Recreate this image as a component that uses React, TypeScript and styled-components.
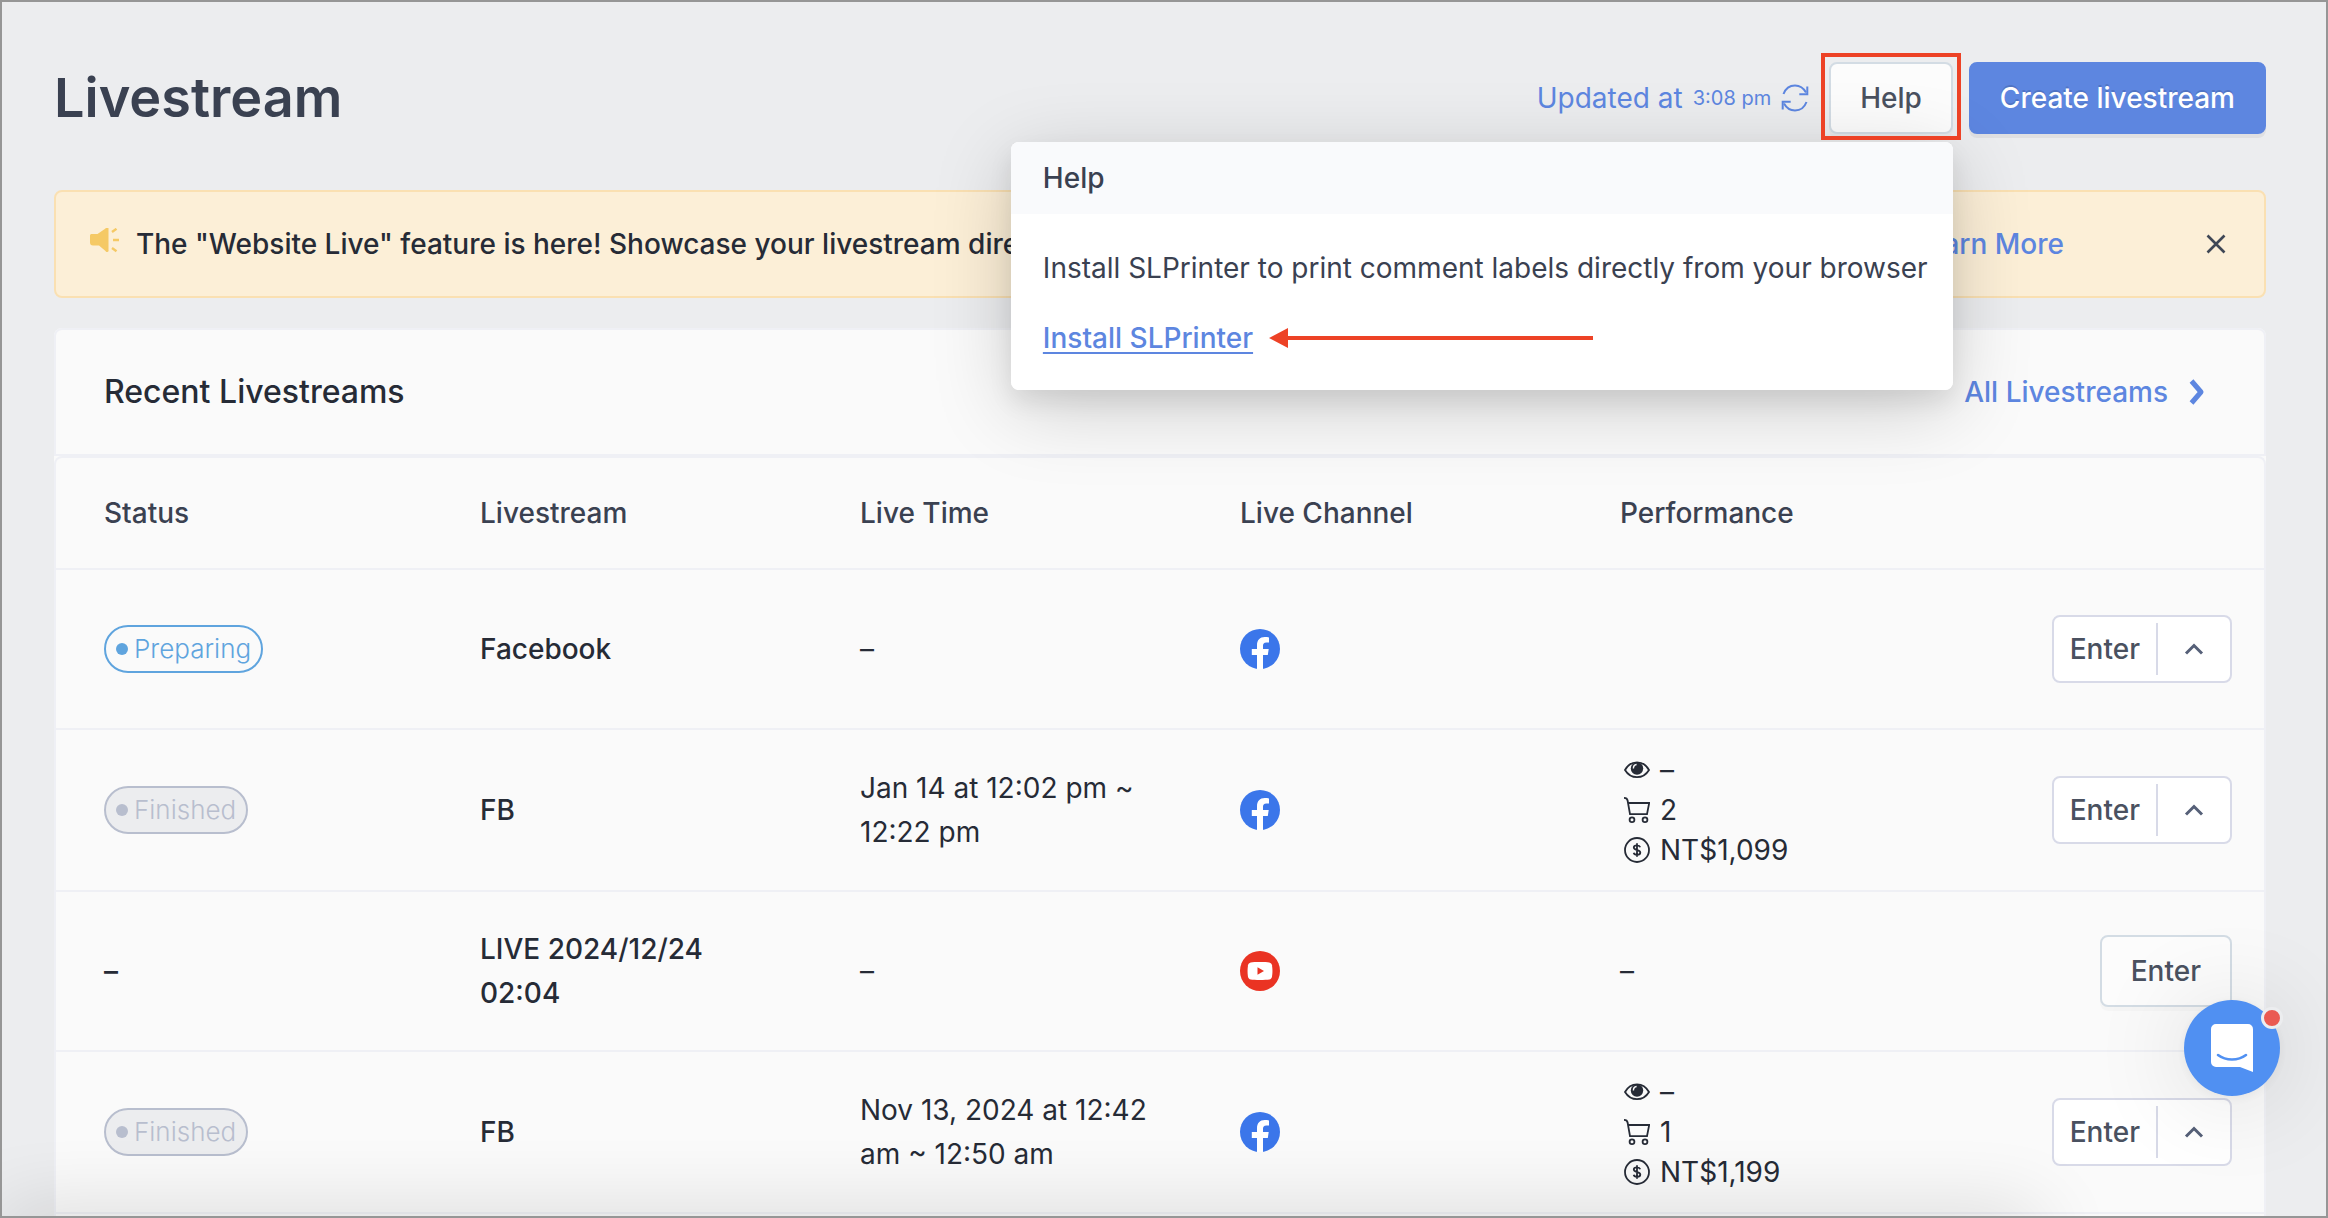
import React from "react";
import styled, { createGlobalStyle, css } from "styled-components";

const color = {
  page: "#ecedef",
  card: "#fafafa",
  line: "#eff0f5",
  ink: "#262b36",
  text: "#3a4151",
  blue: "#5d86e0",
  buttonText: "#4a5160",
  red: "#ed4226",
};

const GlobalStyle = createGlobalStyle`
  * { box-sizing: border-box; }
  body {
    margin: 0;
    background: ${color.page};
    color: ${color.ink};
    font-family: Inter, "Liberation Sans", sans-serif;
    font-size: 28px;
    line-height: 44px;
  }
  button { font: inherit; cursor: pointer; margin: 0; }
  a { color: ${color.blue}; text-decoration: none; }
  svg { display: block; flex: none; }
`;

const Page = styled.div`
  display: flex;
  flex-direction: column;
  height: 100vh;
  overflow: hidden;
  padding: 62px 62px 0 54px;
`;

const Frame = styled.div`
  position: fixed;
  inset: 0;
  z-index: 20;
  border: 2px solid #969696;
  pointer-events: none;
`;

const BottomShade = styled.div`
  position: fixed;
  left: 0;
  right: 290px;
  bottom: -40px;
  height: 40px;
  box-shadow: 0 0 80px rgba(0, 0, 0, 0.2);
  pointer-events: none;
`;

const Header = styled.header`
  position: relative;
  z-index: 5;
  display: flex;
  align-items: center;
  height: 72px;
  margin-bottom: 56px;
  flex: none;
`;

const Title = styled.h1`
  margin: 0 auto 0 0;
  font-size: 54px;
  line-height: 72px;
  font-weight: 600;
  color: ${color.text};
`;

const UpdatedButton = styled.button`
  display: flex;
  align-items: center;
  gap: 10px;
  margin-right: 20px;
  padding: 0;
  border: 0;
  background: none;
  color: ${color.blue};
`;

const UpdatedTime = styled.span`
  font-size: 20px;
`;

const HelpWrap = styled.div`
  position: relative;
  margin-right: 16px;
`;

const HelpHighlight = styled.div`
  position: absolute;
  inset: -9px -8px -6px;
  z-index: 2;
  border: 4px solid ${color.red};
  pointer-events: none;
`;

const buttonShape = css`
  height: 72px;
  padding: 0 29px;
  border-radius: 8px;
  font-weight: 500;
`;

const OutlineButton = styled.button`
  ${buttonShape}
  border: 2px solid #d3dce4;
  background: #fcfcfc;
  color: ${color.buttonText};
  box-shadow: 0 4px 0 rgba(0, 0, 0, 0.02);
`;

const PrimaryButton = styled.button`
  ${buttonShape}
  border: 2px solid ${color.blue};
  background: ${color.blue};
  color: #fff;
  text-shadow: 0 -2px 0 rgba(0, 0, 0, 0.12);
  box-shadow: 0 4px 0 rgba(0, 0, 0, 0.05);
`;

const Popover = styled.div`
  position: absolute;
  top: 80px;
  right: 0;
  width: 942px;
  border-radius: 8px;
  background: #fff;
  color: ${color.text};
  white-space: nowrap;
  overflow: hidden;
`;

const PopoverShadow = styled.div`
  position: absolute;
  top: 80px;
  right: 0;
  width: 942px;
  height: 248px;
  border-radius: 8px;
  box-shadow: 0 12px 24px rgba(0, 0, 0, 0.08), 0 18px 80px rgba(0, 0, 0, 0.18);
  pointer-events: none;
`;

const PopoverTitle = styled.h2`
  margin: 0;
  padding: 14px 32px;
  background: #f9fafc;
  font-size: 28px;
  line-height: 44px;
  font-weight: 500;
`;

const PopoverBody = styled.div`
  display: flex;
  flex-direction: column;
  gap: 26px;
  padding: 32px 24px 30px 32px;
`;

const PopoverText = styled.p`
  margin: 0;
`;

const PopoverAction = styled.div`
  display: flex;
  align-items: center;
  gap: 16px;
`;

const InstallLink = styled.a`
  font-weight: 500;
  text-decoration: underline;
  text-decoration-thickness: 2px;
  text-underline-offset: 4px;
  text-decoration-skip-ink: none;
`;

const Alert = styled.section`
  display: flex;
  align-items: center;
  flex: none;
  margin-bottom: 30px;
  padding: 32px;
  border: 2px solid #fae0b2;
  border-radius: 8px;
  background: #fcefd7;
  line-height: 40px;
  font-weight: 500;
`;

const AlertBody = styled.div`
  display: flex;
  flex: 1;
  min-width: 0;
  padding: 0 136px 0 16px;
`;

const AlertText = styled.span`
  flex: 1;
  min-width: 0;
  overflow: hidden;
  text-overflow: ellipsis;
  white-space: nowrap;
`;

const CloseButton = styled.button`
  display: grid;
  place-items: center;
  width: 32px;
  height: 32px;
  padding: 0;
  border: 0;
  background: none;
  color: #3f4755;
`;

const Panel = styled.section`
  display: flex;
  flex-direction: column;
  flex: 1;
  border-radius: 8px 8px 0 0;
  background: ${color.card};
`;

const PanelHead = styled.div`
  display: flex;
  align-items: center;
  justify-content: space-between;
  height: 128px;
  padding: 0 48px;
  border: 2px solid ${color.line};
  border-radius: 8px 8px 0 0;
`;

const PanelTitle = styled.h2`
  margin: 0;
  font-size: 32px;
  line-height: 44px;
  font-weight: 500;
`;

const AllLink = styled.a`
  display: flex;
  align-items: center;
  gap: 16px;
  font-weight: 500;
`;

const TableBox = styled.div`
  flex: 1;
  border: 2px solid ${color.line};
  border-bottom: 0;
  border-radius: 8px 8px 0 0;
`;

const Table = styled.table`
  width: 100%;
  table-layout: fixed;
  border-collapse: separate;
  border-spacing: 0;
`;

const Col = styled.col<{ $width?: number }>`
  width: ${(p) => (p.$width ? `${p.$width}px` : "auto")};
`;

const cell = css`
  padding: 0 60px 0 24px;
  border-bottom: 2px solid ${color.line};
  text-align: left;
  vertical-align: middle;

  &:first-child { padding-left: 48px; }
  &:last-child { padding: 0 32px 0 0; }
`;

const Th = styled.th`
  ${cell}
  height: 112px;
  font-weight: 500;
  color: ${color.text};
`;

const Td = styled.td<{ $strong?: boolean }>`
  ${cell}
  height: 160px;
  font-weight: ${(p) => (p.$strong ? 500 : 400)};
`;

const Pill = styled.span<{ $done: boolean }>`
  display: inline-flex;
  align-items: center;
  gap: 6px;
  height: 48px;
  padding: 0 10px;
  border: 2px solid currentColor;
  border-radius: 24px;
  background: ${(p) => (p.$done ? "#ecedef" : "transparent")};
  color: ${(p) => (p.$done ? "#b8bece" : "#5fa4de")};
  font-size: 26px;
  font-weight: 300;
  vertical-align: middle;
`;

const Dot = styled.i`
  width: 12px;
  height: 12px;
  border-radius: 50%;
  background: currentColor;
`;

const Metrics = styled.ul`
  list-style: none;
  margin: 0;
  padding: 20px 0;
  line-height: 40px;
`;

const Metric = styled.li`
  display: flex;
  align-items: center;
  gap: 10px;
  margin-left: 4px;
`;

const Actions = styled.div`
  display: flex;
  justify-content: flex-end;
`;

const SplitButton = styled.div`
  display: flex;
  align-items: center;
  height: 68px;
  border: 2px solid #d8dae8;
  border-radius: 8px;
  background: #fff;
`;

const SplitMain = styled.button`
  height: 52px;
  padding: 0 16px;
  border: 0;
  border-right: 2px solid #d8dae8;
  background: none;
  color: ${color.buttonText};
  font-weight: 500;
`;

const SplitToggle = styled.button`
  display: grid;
  place-items: center;
  width: 72px;
  height: 52px;
  padding: 0;
  border: 0;
  background: none;
  color: #566078;
`;

const ChatLauncher = styled.button`
  position: fixed;
  right: 48px;
  bottom: 122px;
  z-index: 10;
  display: grid;
  place-items: center;
  width: 96px;
  height: 96px;
  padding: 0;
  border: 0;
  border-radius: 50%;
  background: #5090f2;
  box-shadow: 0 2px 12px rgba(0, 0, 0, 0.06), 0 4px 100px rgba(0, 0, 0, 0.14);
`;

const ChatBadge = styled.span`
  position: absolute;
  top: 7px;
  right: -3px;
  width: 22px;
  height: 22px;
  border: 3px solid ${color.page};
  border-radius: 50%;
  background: #ea5a52;
`;

const RefreshIcon = () => (
  <svg width="28" height="28" viewBox="0 0 28 28" fill="none" stroke="currentColor" strokeWidth="2" aria-hidden="true">
    <path d="M2.5 10C4.5 4.700 9 1.500 14 1.500c5 0 8.800 3 11 7" />
    <path d="M26.300 2.500v7.800h-8" />
    <path d="M25.500 18c-2 5.300-6.500 8.500-11.500 8.500-5 0-8.800-3-11-7" />
    <path d="M1.700 25.500v-7.800h8" />
  </svg>
);

const MegaphoneIcon = () => (
  <svg width="32" height="32" viewBox="0 0 32 32" fill="#f5c965" aria-hidden="true">
    <path d="M3 6h6.500L17.500.600a1.500 1.500 0 0 1 3 .900v20.500a1.500 1.500 0 0 1-3 .900L11 17.500H5a3 3 0 0 1-3-3V8a2 2 0 0 1 1-2z" />
    <path d="M24 4l4.500-3.200M25 12h6M24 20l4.500 3.200" stroke="#f5c965" strokeWidth="2.400" fill="none" />
  </svg>
);

const CloseIcon = () => (
  <svg width="20" height="20" viewBox="0 0 20 20" stroke="currentColor" strokeWidth="2.600" aria-hidden="true">
    <path d="M1.500 1.500l17 17M18.500 1.500l-17 17" />
  </svg>
);

const ChevronRight = () => (
  <svg width="32" height="32" viewBox="0 0 32 32" fill="none" stroke="currentColor" strokeWidth="5" strokeLinejoin="round" aria-hidden="true">
    <path d="M7.500 5L17 16 7.500 27" />
  </svg>
);

const ChevronUp = () => (
  <svg width="20" height="12" viewBox="0 0 20 12" fill="none" stroke="currentColor" strokeWidth="3" aria-hidden="true">
    <path d="M2 10.500l8-8 8 8" />
  </svg>
);

const LongArrow = () => (
  <svg width="324" height="20" viewBox="0 0 324 20" fill={color.red} aria-hidden="true">
    <path d="M0 10L19 0v8h305v4H19v8z" />
  </svg>
);

const FacebookIcon = () => (
  <svg width="40" height="40" viewBox="0 0 40 40" role="img" aria-label="Facebook">
    <circle cx="20" cy="20" r="20" fill="#3b76ea" />
    <path fill="#fff" d="M17 40V26h-5.200v-6H17v-3.800C17 11 20 8 24.700 8c1.600 0 3.200.200 4.300.400v5h-2.600c-2.600 0-3.400 1.500-3.400 3.200V20h5.700l-.900 6H23v14z" />
  </svg>
);

const YoutubeIcon = () => (
  <svg width="40" height="40" viewBox="0 0 40 40" role="img" aria-label="YouTube">
    <circle cx="20" cy="20" r="20" fill="#ea3323" />
    <path fill="#fff" d="M20 11c4 0 7.500.100 9.300.500 1.500.400 2.400 1.400 2.700 2.800.600 3.600.600 7.800 0 11.400-.300 1.400-1.200 2.400-2.700 2.800-3.600.600-15 .600-18.600 0-1.500-.400-2.400-1.400-2.700-2.800-.600-3.600-.600-7.800 0-11.400.300-1.400 1.200-2.400 2.700-2.800C12.500 11.100 16 11 20 11z" />
    <path fill="#ea3323" d="M17.500 16.300v7.400l6.500-3.700z" />
  </svg>
);

const EyeIcon = () => (
  <svg width="26" height="26" viewBox="0 0 26 26" aria-hidden="true">
    <path d="M1 13C4 7.500 8.200 5.300 13 5.300s9 2.200 12 7.700c-3 5-7.200 7.200-12 7.200S4 18 1 13z" fill="none" stroke="currentColor" strokeWidth="1.800" />
    <circle cx="13" cy="11.500" r="6.200" fill="currentColor" />
    <path d="M9.400 11.500c0-2.200 1.200-3.800 3.200-4" fill="none" stroke="#fafafa" strokeWidth="1.400" />
  </svg>
);

const CartIcon = () => (
  <svg width="26" height="28" viewBox="0 0 26 28" fill="none" stroke="currentColor" strokeWidth="1.800" aria-hidden="true">
    <path d="M0 1.800c2 0 3.300.800 3.600 2.700L6 18.200h17L25.200 7H4" />
    <circle cx="8" cy="23.800" r="2.400" />
    <circle cx="21" cy="23.800" r="2.400" />
  </svg>
);

const CoinIcon = () => (
  <svg width="26" height="26" viewBox="0 0 26 26" fill="none" stroke="currentColor" strokeWidth="1.800" aria-hidden="true">
    <circle cx="13" cy="13" r="12" />
    <path d="M16.200 10.200c-.400-1.200-1.500-1.900-3.200-1.900-1.900 0-3.200.900-3.200 2.300 0 3.200 6.500 1.600 6.500 4.900 0 1.400-1.300 2.300-3.300 2.300-1.800 0-3-.800-3.300-2.100M13 6.200v13.600" />
  </svg>
);

const ChatIcon = () => (
  <svg width="42" height="48" viewBox="0 0 42 48" aria-hidden="true">
    <path fill="#fff" d="M5 0h32a5 5 0 0 1 5 5v43l-13-5H5a5 5 0 0 1-5-5V5a5 5 0 0 1 5-5z" />
    <path d="M7 31c8 6 20 6 28 0" fill="none" stroke="#5090f2" strokeWidth="2.600" strokeLinecap="round" />
  </svg>
);

type Stream = {
  status?: "Preparing" | "Finished";
  name: string;
  time: string;
  channel: "facebook" | "youtube";
  performance?: { views: string; orders: string; sales: string } | "–";
  menu: boolean;
};

const streams: Stream[] = [
  { status: "Preparing", name: "Facebook", time: "–", channel: "facebook", menu: true },
  {
    status: "Finished",
    name: "FB",
    time: "Jan 14 at 12:02 pm ~ 12:22 pm",
    channel: "facebook",
    performance: { views: "–", orders: "2", sales: "NT$1,099" },
    menu: true,
  },
  { name: "LIVE 2024/12/24 02:04", time: "–", channel: "youtube", performance: "–", menu: false },
  {
    status: "Finished",
    name: "FB",
    time: "Nov 13, 2024 at 12:42 am ~ 12:50 am",
    channel: "facebook",
    performance: { views: "–", orders: "1", sales: "NT$1,199" },
    menu: true,
  },
];

function Performance({ value }: { value: Stream["performance"] }) {
  if (!value || typeof value === "string") return <>{value}</>;
  return (
    <Metrics>
      <Metric><EyeIcon />{value.views}</Metric>
      <Metric><CartIcon />{value.orders}</Metric>
      <Metric><CoinIcon />{value.sales}</Metric>
    </Metrics>
  );
}

function StreamRow({ stream }: { stream: Stream }) {
  return (
    <tr>
      <Td $strong>
        {stream.status ? (
          <Pill $done={stream.status === "Finished"}><Dot />{stream.status}</Pill>
        ) : "–"}
      </Td>
      <Td $strong>{stream.name}</Td>
      <Td>{stream.time}</Td>
      <Td>{stream.channel === "facebook" ? <FacebookIcon /> : <YoutubeIcon />}</Td>
      <Td><Performance value={stream.performance} /></Td>
      <Td>
        <Actions>
          {stream.menu ? (
            <SplitButton>
              <SplitMain type="button">Enter</SplitMain>
              <SplitToggle type="button" aria-label="More actions"><ChevronUp /></SplitToggle>
            </SplitButton>
          ) : (
            <OutlineButton type="button">Enter</OutlineButton>
          )}
        </Actions>
      </Td>
    </tr>
  );
}

export default function App() {
  return (
    <>
      <GlobalStyle />
      <Page>
        <Header>
          <Title>Livestream</Title>
          <UpdatedButton type="button">
            Updated at <UpdatedTime>3:08 pm</UpdatedTime>
            <RefreshIcon />
          </UpdatedButton>
          <HelpWrap>
            <OutlineButton type="button" aria-expanded="true">Help</OutlineButton>
            <HelpHighlight />
            <PopoverShadow />
            <Popover>
              <PopoverTitle>Help</PopoverTitle>
              <PopoverBody>
                <PopoverText>Install SLPrinter to print comment labels directly from your browser</PopoverText>
                <PopoverAction>
                  <InstallLink href="#install">Install SLPrinter</InstallLink>
                  <LongArrow />
                </PopoverAction>
              </PopoverBody>
            </Popover>
          </HelpWrap>
          <PrimaryButton type="button">Create livestream</PrimaryButton>
        </Header>

        <Alert>
          <MegaphoneIcon />
          <AlertBody>
            <AlertText>The "Website Live" feature is here! Showcase your livestream directly on your website.</AlertText>
            <a href="#learn-more">Learn More</a>
          </AlertBody>
          <CloseButton type="button" aria-label="Close"><CloseIcon /></CloseButton>
        </Alert>

        <Panel>
          <PanelHead>
            <PanelTitle>Recent Livestreams</PanelTitle>
            <AllLink href="#all">All Livestreams <ChevronRight /></AllLink>
          </PanelHead>
          <TableBox>
            <Table>
              <colgroup>
                <Col $width={400} />
                <Col $width={380} />
                <Col $width={380} />
                <Col $width={380} />
                <Col $width={380} />
                <Col />
              </colgroup>
              <thead>
                <tr>
                  <Th scope="col">Status</Th>
                  <Th scope="col">Livestream</Th>
                  <Th scope="col">Live Time</Th>
                  <Th scope="col">Live Channel</Th>
                  <Th scope="col">Performance</Th>
                  <Th scope="col" aria-label="Actions" />
                </tr>
              </thead>
              <tbody>
                {streams.map((s, i) => <StreamRow key={i} stream={s} />)}
              </tbody>
            </Table>
          </TableBox>
        </Panel>
      </Page>
      <BottomShade />
      <ChatLauncher type="button" aria-label="Open chat">
        <ChatIcon />
        <ChatBadge />
      </ChatLauncher>
      <Frame />
    </>
  );
}
